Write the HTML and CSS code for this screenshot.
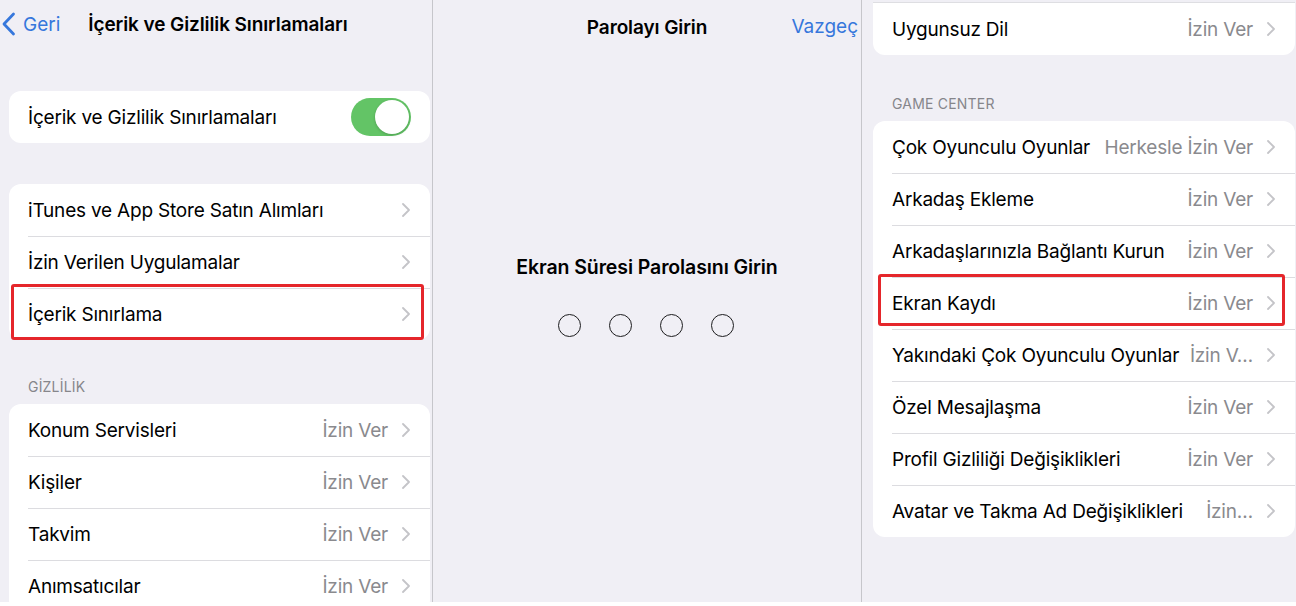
FILE: index.html
```html
<!DOCTYPE html>
<html lang="tr">
<head>
  <meta charset="UTF-8" />
  <meta name="viewport" content="width=device-width, initial-scale=1.0"/>
  <title>İçerik ve Gizlilik Sınırlamaları</title>
  <link rel="stylesheet" href="styles.css">
</head>
<body>
  <div class="screen">

    <!-- left: restrictions list -->
    <div class="pane pane-left">
      <div class="navbar">
        <a class="back">
          <svg width="15" height="24" viewBox="0 0 15 24"><path d="M12.5 2L3 12l9.5 10" fill="none" stroke="currentColor" stroke-width="2.8" stroke-linecap="round" stroke-linejoin="round"/></svg>
          <span>Geri</span>
        </a>
        <div class="nav-title">İçerik ve Gizlilik Sınırlamaları</div>
      </div>

      <div class="card card-first">
        <div class="row">
          <span class="label">İçerik ve Gizlilik Sınırlamaları</span>
          <span class="toggle"><span class="knob"></span></span>
        </div>
      </div>

      <div class="card card-gap">
        <div class="row"><span class="label">iTunes ve App Store Satın Alımları</span><span class="chev"></span></div>
        <div class="row"><span class="label">İzin Verilen Uygulamalar</span><span class="chev"></span></div>
        <div class="row marked"><span class="label">İçerik Sınırlama</span><span class="chev"></span></div>
      </div>

      <div class="section-title">GİZLİLİK</div>
      <div class="card">
        <div class="row"><span class="label">Konum Servisleri</span><span class="value">İzin Ver</span><span class="chev"></span></div>
        <div class="row"><span class="label">Kişiler</span><span class="value">İzin Ver</span><span class="chev"></span></div>
        <div class="row"><span class="label">Takvim</span><span class="value">İzin Ver</span><span class="chev"></span></div>
        <div class="row"><span class="label">Anımsatıcılar</span><span class="value">İzin Ver</span><span class="chev"></span></div>
      </div>
    </div>

    <!-- middle: passcode -->
    <div class="pane pane-mid">
      <div class="navbar navbar-mid">
        <div class="nav-title">Parolayı Girin</div>
        <a class="cancel">Vazgeç</a>
      </div>
      <div class="passcode">
        <div class="passcode-title">Ekran Süresi Parolasını Girin</div>
        <div class="dots">
          <span class="dot"></span>
          <span class="dot"></span>
          <span class="dot"></span>
          <span class="dot"></span>
        </div>
      </div>
    </div>

    <!-- right: game center -->
    <div class="pane pane-right">
      <div class="card card-top">
        <div class="row"><span class="label">Uygunsuz Dil</span><span class="value">İzin Ver</span><span class="chev"></span></div>
      </div>

      <div class="section-title">GAME CENTER</div>
      <div class="card">
        <div class="row"><span class="label">Çok Oyunculu Oyunlar</span><span class="value">Herkesle İzin Ver</span><span class="chev"></span></div>
        <div class="row"><span class="label">Arkadaş Ekleme</span><span class="value">İzin Ver</span><span class="chev"></span></div>
        <div class="row"><span class="label">Arkadaşlarınızla Bağlantı Kurun</span><span class="value">İzin Ver</span><span class="chev"></span></div>
        <div class="row marked"><span class="label">Ekran Kaydı</span><span class="value">İzin Ver</span><span class="chev"></span></div>
        <div class="row"><span class="label">Yakındaki Çok Oyunculu Oyunlar</span><span class="value">İzin V…</span><span class="chev"></span></div>
        <div class="row"><span class="label">Özel Mesajlaşma</span><span class="value">İzin Ver</span><span class="chev"></span></div>
        <div class="row"><span class="label">Profil Gizliliği Değişiklikleri</span><span class="value">İzin Ver</span><span class="chev"></span></div>
        <div class="row"><span class="label">Avatar ve Takma Ad Değişiklikleri</span><span class="value">İzin…</span><span class="chev"></span></div>
      </div>
    </div>

  </div>
</body>
</html>
```

FILE: styles.css
```css
html {
  background-color: #ffffff;
}
body {
  margin: 0;
  font-family: Inter, "Noto Sans", sans-serif;
  color: #000000;
}
.screen {
  display: flex;
  height: 602px;
  overflow: hidden;
  background-color: #f0eff5;
}
.pane {
  box-sizing: border-box;
  overflow: hidden;
  flex: none;
}
.pane-left {
  width: 433px;
  padding: 0 2px 0 9px;
  border-right: 1px solid #c6c6cb;
}
.pane-mid {
  width: 429px;
  border-right: 1px solid #c6c6cb;
}
.pane-right {
  width: 434px;
  padding: 0 1px 0 11px;
}

/* nav bars */
.navbar {
  display: flex;
  align-items: center;
  height: 48px;
  font-size: 19px;
  margin-left: -9px;
}
.back {
  display: flex;
  align-items: center;
  gap: 7px;
  color: #3677dc;
  padding-left: 1px;
}
.nav-title {
  font-weight: 600;
  margin-left: 28px;
  letter-spacing: -0.1px;
}
.navbar-mid {
  position: relative;
  justify-content: center;
  margin-left: 0;
  height: 54px;
}
.navbar-mid .nav-title {
  margin-left: 0;
}
.cancel {
  position: absolute;
  right: 3px;
  top: 15px;
  color: #3677dc;
}

/* cards */
.card {
  background-color: #ffffff;
  border-radius: 12px;
}
.card-first {
  margin-top: 43px;
}
.card-gap {
  margin-top: 41px;
}
.card-top {
  margin-top: 2px;
  border-top-left-radius: 0;
  border-top-right-radius: 0;
  border-top: 1px solid #dedee2;
}
.row {
  position: relative;
  display: flex;
  align-items: center;
  height: 52px;
  padding: 0 20px 0 19px;
  font-size: 19px;
  letter-spacing: -0.2px;
}
.row + .row::before {
  content: "";
  position: absolute;
  left: 19px;
  right: 0;
  top: 0;
  border-top: 1px solid #dcdce0;
}
.label {
  flex: 1;
  white-space: nowrap;
}
.value {
  color: #8a8a8e;
  white-space: nowrap;
  margin-left: 10px;
}
.chev {
  width: 8px;
  height: 14px;
  margin-left: 14px;
  background: no-repeat center/8px 14px url("data:image/svg+xml,%3Csvg xmlns='http://www.w3.org/2000/svg' width='8' height='14' viewBox='0 0 8 14'%3E%3Cpath d='M1 1l6 6-6 6' fill='none' stroke='%23c4c4c8' stroke-width='1.8' stroke-linecap='round' stroke-linejoin='round'/%3E%3C/svg%3E");
}
.marked::after {
  content: "";
  position: absolute;
  left: 2px;
  right: 6px;
  top: -4px;
  bottom: 0;
  border: 3px solid #e5262b;
  border-radius: 3px;
}
.pane-right .marked::after {
  left: 5px;
  right: 10px;
  top: -3px;
  bottom: 3px;
}

/* toggle */
.toggle {
  display: flex;
  justify-content: flex-end;
  align-items: center;
  width: 60px;
  height: 38px;
  border-radius: 19px;
  background-color: #63c466;
  margin-right: -1px;
}
.knob {
  width: 34px;
  height: 34px;
  margin-right: 2px;
  border-radius: 50%;
  background-color: #ffffff;
  box-shadow: 0 1px 3px rgba(0, 0, 0, 0.2);
}

.section-title {
  font-size: 14px;
  color: #86868b;
  padding: 40px 0 9px 19px;
  letter-spacing: 0.2px;
}
.pane-left .section-title {
  padding-top: 38px;
}

/* passcode */
.passcode {
  display: flex;
  flex-direction: column;
  align-items: center;
  padding-top: 201px;
}
.passcode-title {
  font-size: 19.5px;
  font-weight: 600;
  letter-spacing: -0.1px;
}
.dots {
  display: flex;
  gap: 28px;
  margin-top: 35px;
  margin-left: -2px;
}
.dot {
  box-sizing: border-box;
  width: 23px;
  height: 23px;
  border: 1.6px solid #1c1c1e;
  border-radius: 50%;
}
```
